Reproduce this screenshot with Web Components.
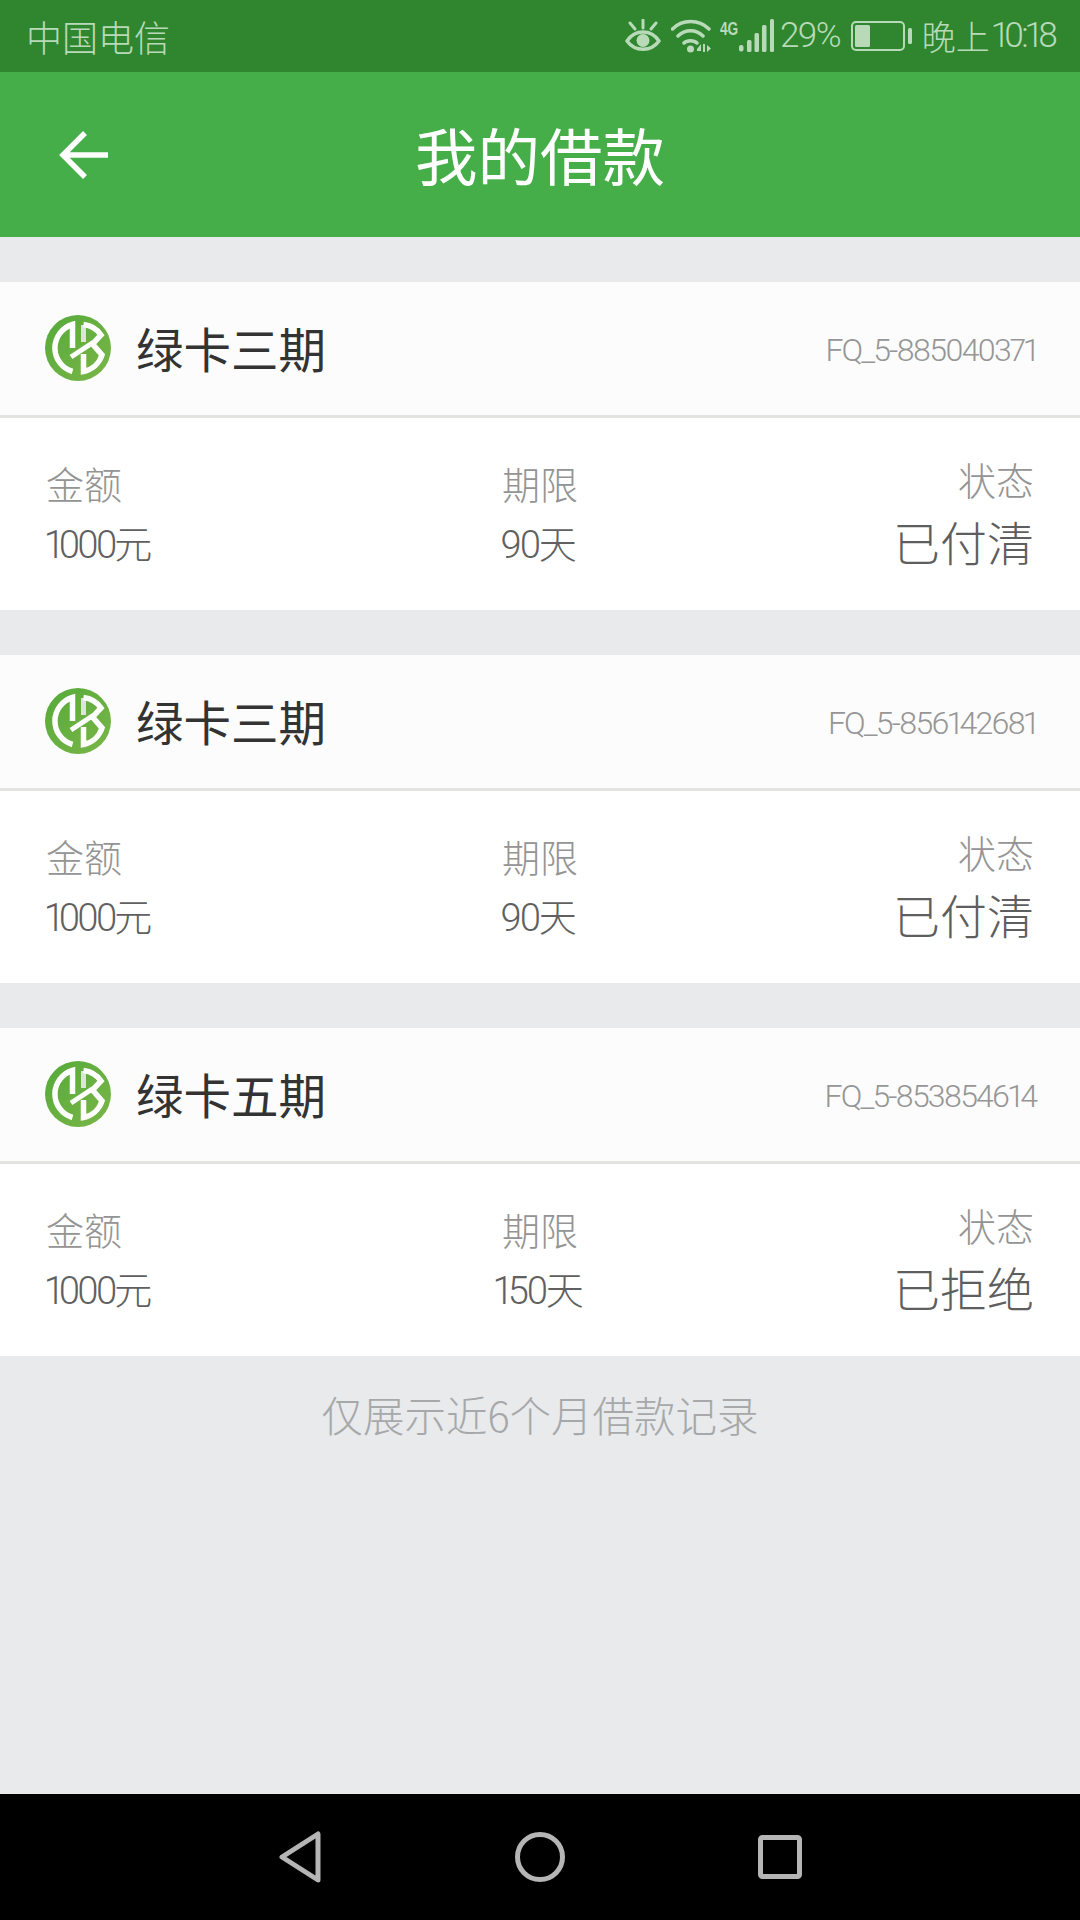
<!DOCTYPE html>
<html lang="zh">
<head>
<meta charset="utf-8">
<title>我的借款</title>
<style>
  html, body { margin: 0; padding: 0; }
  body {
    width: 1080px;
    height: 1920px;
    display: flex;
    flex-direction: column;
    background: #e9eaec;
    font-family: "Roboto", "Noto Sans CJK SC", sans-serif;
    overflow: hidden;
  }
  main { flex: 1; display: flex; flex-direction: column; padding-top: 45px; gap: 45px; }
</style>
</head>
<body>
<status-bar carrier="中国电信" battery="29%" time-label="晚上" time="10:18"></status-bar>
<app-bar title="我的借款"></app-bar>
<main>
  <loan-card name="绿卡三期" order="FQ_5-885040371" amount="1000元" term="90天" state="已付清"></loan-card>
  <loan-card name="绿卡三期" order="FQ_5-856142681" amount="1000元" term="90天" state="已付清"></loan-card>
  <loan-card name="绿卡五期" order="FQ_5-853854614" amount="1000元" term="150天" state="已拒绝"></loan-card>
  <list-note>仅展示近6个月借款记录</list-note>
</main>
<nav-bar></nav-bar>

<script>
const CJK = '"Noto Sans CJK SC", sans-serif';
const NUM = '"Roboto", "Noto Sans CJK SC", sans-serif';

class StatusBar extends HTMLElement {
  constructor() {
    super();
    this.attachShadow({ mode: 'open' });
  }
  connectedCallback() {
    this.shadowRoot.innerHTML = `
      <style>
        :host { display: flex; align-items: center; height: 72px; background: #2f862f; color: #b9dab9; padding: 0 25px 0 26px; box-sizing: border-box; }
        .carrier { font: 300 36px/72px ${CJK}; flex: 1; margin-top: -1px; }
        .icons { display: flex; align-items: center; }
        svg { display: block; flex: none; }
        .g4 { display: block; width: 18px; margin: -15px 0 0 9px; font: 700 19px/14px "Liberation Sans", sans-serif; white-space: nowrap; transform: scaleX(.72); transform-origin: 0 0; }
        .pct { font: 300 35px/72px ${NUM}; font-feature-settings: "pnum"; letter-spacing: -1.8px; margin-left: 6px; }
        .tl { font: 300 34px/72px ${CJK}; margin-left: 10px; }
        .tm { font: 300 35px/72px ${NUM}; font-feature-settings: "pnum"; letter-spacing: -3px; margin-left: 2px; }
      </style>
      <span class="carrier">${this.getAttribute('carrier')}</span>
      <div class="icons">
        <svg width="36" height="34" viewBox="0 0 36 34" fill="none" stroke="#b9dab9">
          <path d="M2 22C10 10 26 10 34 22C26 33 10 33 2 22Z" stroke-width="3.500" stroke-linejoin="round"/>
          <circle cx="18" cy="21.500" r="6.500" fill="#b9dab9" stroke="none"/>
          <path d="M18 1V9M5 4L10 10M31 4L26 10" stroke-width="3" stroke-linecap="round"/>
        </svg>
        <svg style="margin-left:10px" width="40" height="34" viewBox="0 0 40 34" fill="none" stroke="#b9dab9">
          <path d="M1.500 10C11 0 28 0 38 10M7 17C14 10 25 10 32 17M13 24C16 21 23 21 26 24" stroke-width="3.500" stroke-linecap="round"/>
          <circle cx="19.500" cy="30" r="3.500" fill="#b9dab9" stroke="none"/>
          <path d="M32 25V33H34V25ZM36 26V33L40 29.500ZM30 25L26 30V32H30Z" fill="#b9dab9" stroke="none"/>
        </svg>
        <span class="g4">4G</span>
        <svg style="margin-left:1px" width="35" height="34" viewBox="18 0 35 34" fill="#b9dab9">
          <rect x="18" y="26" width="4.500" height="6.500" rx="2"/>
          <rect x="26" y="21" width="4.500" height="12" rx="1.500"/>
          <rect x="33.500" y="14" width="4.500" height="19" rx="1.500"/>
          <rect x="41" y="6" width="4.500" height="27" rx="1.500"/>
          <rect x="49" y="0" width="4" height="33" rx="1.500"/>
        </svg>
        <span class="pct">${this.getAttribute('battery')}</span>
        <svg style="margin-left:11px" width="61" height="30" viewBox="0 0 61 30" fill="none">
          <rect x="1" y="1" width="52" height="28" rx="4" stroke="#b9dab9" stroke-width="2"/>
          <rect x="4" y="4" width="15" height="22" rx="1.500" fill="#b9dab9"/>
          <rect x="57" y="7" width="4" height="16" rx="1.500" fill="#b9dab9"/>
        </svg>
        <span class="tl">${this.getAttribute('time-label')}</span>
        <span class="tm">${this.getAttribute('time')}</span>
      </div>`;
  }
}

class AppBar extends HTMLElement {
  constructor() {
    super();
    this.attachShadow({ mode: 'open' });
  }
  connectedCallback() {
    this.shadowRoot.innerHTML = `
      <style>
        :host { display: grid; grid-template-columns: 1fr auto 1fr; align-items: center; height: 165px; background: #45ae48; color: #fff; }
        svg { display: block; margin-left: 59px; }
        h1 { margin: 0; font: 400 62.500px/1 ${CJK}; }
      </style>
      <svg width="50" height="50" viewBox="0 0 50 50" fill="none" stroke="#fff" stroke-width="5.500">
        <path d="M3 25H49M26 3L4 25L26 47"/>
      </svg>
      <h1>${this.getAttribute('title')}</h1>
      <span></span>`;
  }
}

class LoanLogo extends HTMLElement {
  constructor() {
    super();
    this.attachShadow({ mode: 'open' });
    this.shadowRoot.innerHTML = `
      <style>:host { display: block; width: 66px; height: 66px; margin-top: -2px; } svg { display: block; }</style>
      <svg width="66" height="66" viewBox="-33 -33 66 66" fill="none">
        <defs>
          <linearGradient id="g" x1="0" y1="0" x2="1" y2="1">
            <stop offset="0" stop-color="#55aa3a"/>
            <stop offset="1" stop-color="#7ab648"/>
          </linearGradient>
        </defs>
        <circle r="33" fill="url(#g)"/>
        <path d="M5.500 -23V-6" stroke="#dfe3dc" stroke-width="5"/>
        <g stroke="#fff" stroke-width="5.500">
          <path d="M-5.500 0V-23.500A24.500 24.500 0 0 0 -5.500 23.500"/>
          <path d="M5.500 -23.500A24.500 24.500 0 0 1 23 -13L14.500 -4L24 7A24.500 24.500 0 0 1 5.500 23.500V6"/>
          <path d="M-7 9L15 -5.500" stroke-width="5"/>
        </g>
      </svg>`;
  }
}

class LoanCard extends HTMLElement {
  constructor() {
    super();
    this.attachShadow({ mode: 'open' });
  }
  connectedCallback() {
    const a = n => this.getAttribute(n);
    this.shadowRoot.innerHTML = `
      <style>
        :host { display: block; background: #fff; }
        .head { display: flex; align-items: center; gap: 25px; height: 133px; padding: 0 44px 0 45px; background: #fcfcfc; border-bottom: 3px solid #e3e3e0; }
        .name { font: 400 47.500px/1 ${CJK}; color: #333; flex: 1; margin-top: -2px; }
        .order { font: 300 32px/1 ${NUM}; font-feature-settings: "pnum"; color: #969696; letter-spacing: -1.9px; margin-top: 2px; }
        .body { display: grid; grid-template-columns: 1fr 1fr 1fr; height: 192px; padding: 0 46px; box-sizing: border-box; align-items: start; }
        .col { display: flex; flex-direction: column; }
        .col.mid { align-items: center; }
        .col.end { align-items: flex-end; }
        .label { font: 300 38px/46px ${CJK}; color: #949494; margin-top: 42px; }
        .value { font: 300 38px/46px ${NUM}; font-feature-settings: "pnum"; color: #606060; letter-spacing: -3.200px; margin: 16px 0 0 -1px; }
        .mid .value { margin-left: -5px; letter-spacing: -2.500px; }
        .end .label { margin-top: 38px; }
        .state { font: 300 47px/56px ${CJK}; color: #5e5e5e; margin-top: 11px; }
      </style>
      <div class="head">
        <loan-logo></loan-logo>
        <span class="name">${a('name')}</span>
        <span class="order">${a('order')}</span>
      </div>
      <div class="body">
        <div class="col"><span class="label">金额</span><span class="value">${a('amount')}</span></div>
        <div class="col mid"><span class="label">期限</span><span class="value">${a('term')}</span></div>
        <div class="col end"><span class="label">状态</span><span class="state">${a('state')}</span></div>
      </div>`;
  }
}

class ListNote extends HTMLElement {
  constructor() {
    super();
    this.attachShadow({ mode: 'open' });
    this.shadowRoot.innerHTML = `
      <style>:host { display: block; margin-top: -12px; text-align: center; font: 300 41.500px/50px ${CJK}; color: #a6a8aa; }</style>
      <slot></slot>`;
  }
}

class NavBar extends HTMLElement {
  constructor() {
    super();
    this.attachShadow({ mode: 'open' });
    this.shadowRoot.innerHTML = `
      <style>
        :host { display: grid; grid-template-columns: repeat(3, 240px); padding: 0 180px; justify-items: center; align-items: center; height: 126px; background: #000; }
        svg { display: block; }
      </style>
      <svg width="42" height="52" viewBox="0 0 42 52" fill="none" stroke="#b5b5b5" stroke-width="5" stroke-linejoin="round">
        <path d="M39 3V49L3 26Z"/>
      </svg>
      <svg width="50" height="50" viewBox="0 0 50 50" fill="none" stroke="#b5b5b5" stroke-width="5">
        <circle cx="25" cy="25" r="22.500"/>
      </svg>
      <svg width="44" height="44" viewBox="0 0 44 44" fill="none" stroke="#b5b5b5" stroke-width="5" stroke-linejoin="round">
        <rect x="2.500" y="2.500" width="39" height="39" rx="2"/>
      </svg>`;
  }
}

customElements.define('status-bar', StatusBar);
customElements.define('app-bar', AppBar);
customElements.define('loan-logo', LoanLogo);
customElements.define('loan-card', LoanCard);
customElements.define('list-note', ListNote);
customElements.define('nav-bar', NavBar);
</script>
</body>
</html>
